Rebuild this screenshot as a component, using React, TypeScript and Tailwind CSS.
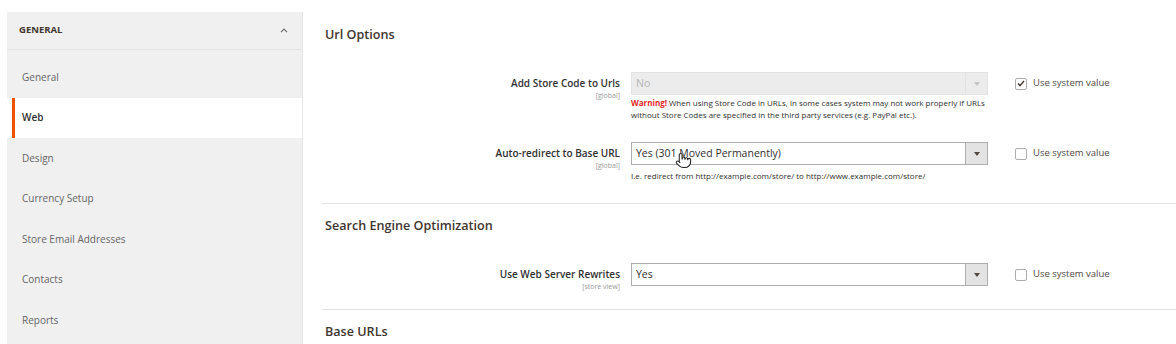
import React from 'react';
import { Pointer } from 'lucide-react';

const navItems = ['General', 'Web', 'Design', 'Currency Setup', 'Store Email Addresses', 'Contacts', 'Reports'];

const Arrow: React.FC<{ muted?: boolean }> = ({ muted }) => (
  <svg width="6" height="4" viewBox="0 0 6 4">
    <path d="M0 0h6L3 4z" fill={muted ? '#c4c4c4' : '#514943'} />
  </svg>
);

interface SelectProps {
  value: string;
  disabled?: boolean;
}

const Select: React.FC<SelectProps> = ({ value, disabled }) => (
  <div
    className={`flex h-[23px] w-[357px] border ${
      disabled ? 'border-[#e3e3e3] bg-[#ececec]' : 'border-[#adadad] bg-white'
    }`}
  >
    <div className={`flex flex-1 items-center pl-[4px] text-[10.5px] ${disabled ? 'text-[#b5b5b5]' : 'text-[#303030]'}`}>
      {value}
    </div>
    <div
      className={`flex w-[22px] items-center justify-center border-l ${
        disabled ? 'border-[#e3e3e3] bg-[#ececec]' : 'border-[#adadad] bg-[#e3e3e3]'
      }`}
    >
      <Arrow muted={disabled} />
    </div>
  </div>
);

const SystemValue: React.FC<{ checked?: boolean }> = ({ checked }) => (
  <label className="flex h-[23px] items-center gap-[6px] text-[9.5px] text-[#514943]">
    <span className="flex h-[12px] w-[12px] items-center justify-center rounded-[2px] border border-[#adadad] bg-white">
      {checked && (
        <svg width="8" height="7" viewBox="0 0 8 7">
          <path d="M1 3.6l2 2L7 1" fill="none" stroke="#41362f" strokeWidth="1.4" />
        </svg>
      )}
    </span>
    Use system value
  </label>
);

interface FieldProps {
  label: string;
  scope: string;
  children: React.ReactNode;
  checked?: boolean;
}

const Field: React.FC<FieldProps> = ({ label, scope, children, checked }) => (
  <div className="flex">
    <div className="w-[298px] pt-[2px] text-right">
      <div className="text-[10px] font-semibold leading-[18px] text-[#303030]">{label}</div>
      <div className="text-[7px] leading-[7px] text-[#999]">{scope}</div>
    </div>
    <div className="ml-[11px] w-[357px]">{children}</div>
    <div className="ml-[27px]">
      <SystemValue checked={checked} />
    </div>
  </div>
);

const SectionTitle: React.FC<{ children: React.ReactNode }> = ({ children }) => (
  <div className="pl-[3px] text-[12.6px] font-semibold leading-[16px] text-[#41362f]">{children}</div>
);

export default function App() {
  return (
    <div className="relative flex h-[344px] w-[1176px] overflow-hidden bg-white font-['Open_Sans',sans-serif]">
      <aside className="ml-[7px] mt-[12px] w-[296px] self-start border-r border-[#e6e6e6] bg-[#f0f0f0] pb-[10px]">
        <div className="flex h-[38px] items-center justify-between border-b border-[#e3e3e3] pl-[12px] pr-[14px]">
          <span className="text-[9.5px] font-bold text-[#41362f]">GENERAL</span>
          <svg width="8" height="5" viewBox="0 0 8 5">
            <path d="M1 4.2L4 1.2l3 3" fill="none" stroke="#6d6d6d" strokeWidth="1.2" />
          </svg>
        </div>
        <ul className="pt-[7px]">
          {navItems.map((item) => {
            const active = item === 'Web';
            return (
              <li
                key={item}
                className={`flex h-[40.5px] items-center text-[10px] ${
                  active
                    ? 'bg-white pl-[5px] font-semibold text-[#303030]'
                    : 'pl-[15px] text-[#666]'
                }`}
              >
                {active && <span className="mr-[7px] h-full w-[3px] bg-[#eb5202]" />}
                {item}
              </li>
            );
          })}
        </ul>
      </aside>

      <main className="ml-[19px] flex-1 pt-[27px]">
        <SectionTitle>Url Options</SectionTitle>

        <div className="mt-[29px]">
          <Field label="Add Store Code to Urls" scope="[global]" checked>
            <Select value="No" disabled />
            <p className="mt-[2px] text-[8px] leading-[12px] text-[#303030]">
              <b className="mr-[2px] text-[#e22626]">Warning!</b>When using Store Code in URLs, in some cases system
              may not work properly if URLs without Store Codes are specified in the third party services (e.g. PayPal
              etc.).
            </p>
          </Field>
        </div>

        <div className="mt-[21px]">
          <Field label="Auto-redirect to Base URL" scope="[global]">
            <Select value="Yes (301 Moved Permanently)" />
            <p className="mt-[5px] text-[8px] leading-[12px] text-[#303030]">
              I.e. redirect from http://example.com/store/ to http://www.example.com/store/
            </p>
          </Field>
        </div>

        <div className="mt-[21px] border-t border-[#e3e3e3] pt-[14px]">
          <SectionTitle>Search Engine Optimization</SectionTitle>
          <div className="mt-[29px]">
            <Field label="Use Web Server Rewrites" scope="[store view]">
              <Select value="Yes" />
            </Field>
          </div>
        </div>

        <div className="mt-[19px] border-t border-[#e3e3e3] pt-[14px]">
          <SectionTitle>Base URLs</SectionTitle>
        </div>
      </main>

      <Pointer className="absolute left-[675px] top-[152px]" size={17} strokeWidth={1.5} fill="white" color="#222" />
    </div>
  );
}
